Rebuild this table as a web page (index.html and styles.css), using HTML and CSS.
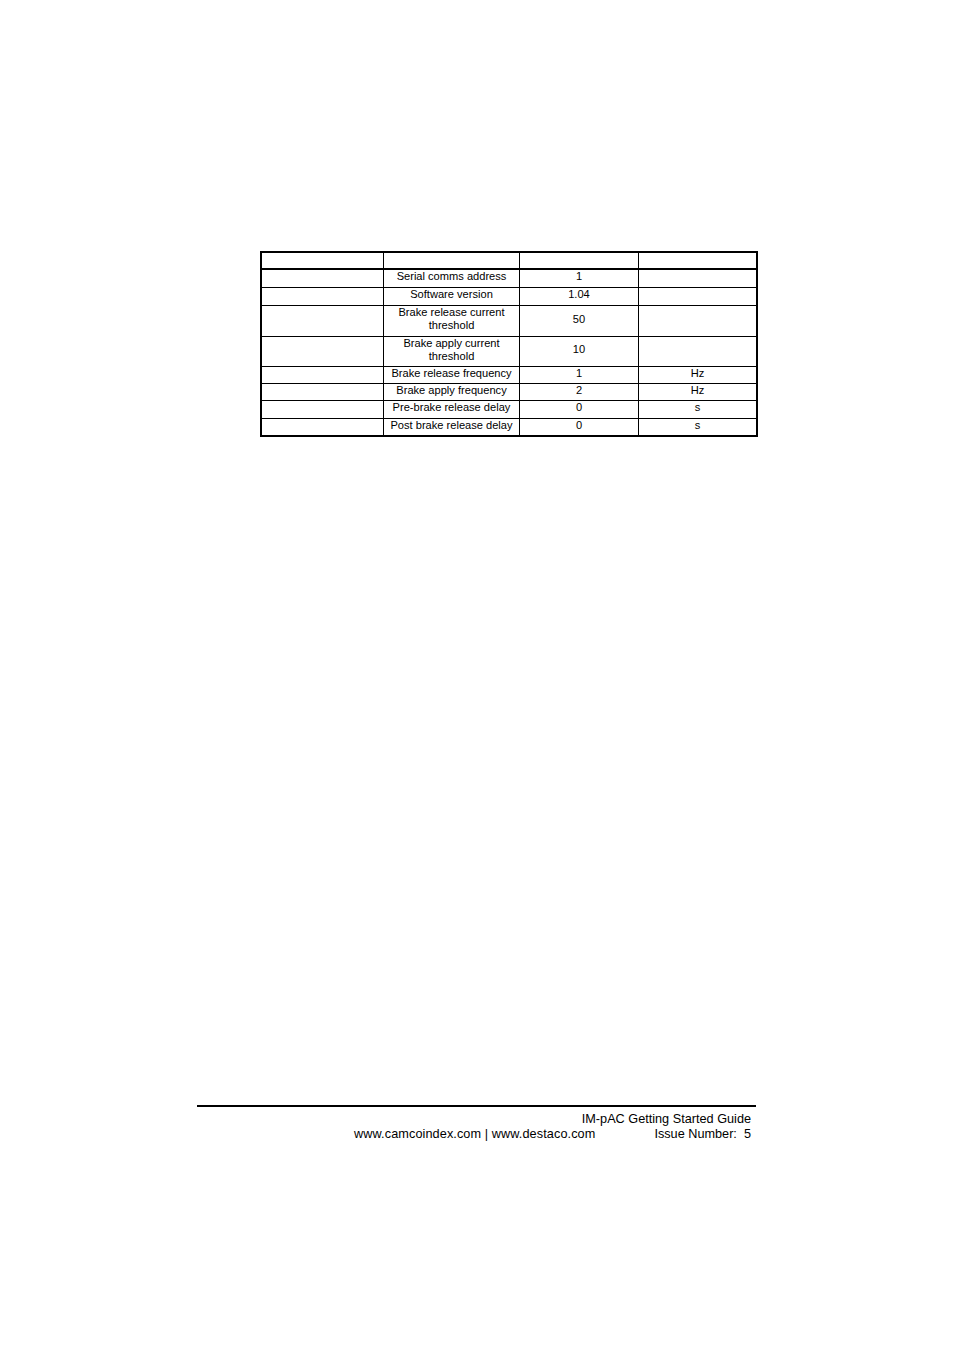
FILE: index.html
```html
<!DOCTYPE html>
<html>
<head>
<meta charset="utf-8">
<link rel="stylesheet" href="styles.css">
</head>
<body>
<div class="page">
  <div class="table">
    <div class="cell head"></div><div class="cell head"></div><div class="cell head"></div><div class="cell head"></div>
    <div class="cell"></div><div class="cell">Serial comms address</div><div class="cell">1</div><div class="cell"></div>
    <div class="cell"></div><div class="cell">Software version</div><div class="cell">1.04</div><div class="cell"></div>
    <div class="cell"></div><div class="cell">Brake release current<br>threshold</div><div class="cell">50</div><div class="cell"></div>
    <div class="cell"></div><div class="cell">Brake apply current<br>threshold</div><div class="cell">10</div><div class="cell"></div>
    <div class="cell"></div><div class="cell">Brake release frequency</div><div class="cell">1</div><div class="cell">Hz</div>
    <div class="cell"></div><div class="cell">Brake apply frequency</div><div class="cell">2</div><div class="cell">Hz</div>
    <div class="cell"></div><div class="cell">Pre-brake release delay</div><div class="cell">0</div><div class="cell">s</div>
    <div class="cell"></div><div class="cell">Post brake release delay</div><div class="cell">0</div><div class="cell">s</div>
  </div>

  <div class="footer">
    <div class="footer-line">IM-pAC Getting Started Guide</div>
    <div class="footer-line split">
      <span class="sites">www.camcoindex.com | www.destaco.com</span>
      <span class="issue">Issue Number:  5</span>
    </div>
  </div>
</div>
</body>
</html>
```

FILE: styles.css
```css
html, body {
  margin: 0;
  padding: 0;
  background: #ffffff;
}

.page {
  width: 954px;
  min-height: 1350px;
  font-family: "Liberation Sans", Arial, sans-serif;
  color: #000000;
  padding-top: 251px;
  box-sizing: border-box;
}

.table {
  margin-left: 260px;
  width: 498px;
  box-sizing: border-box;
  border: 2px solid #000;
  background: #000;
  display: grid;
  grid-template-columns: 121px 135px 118px 117px;
  grid-template-rows: 16px 17px 17px 30px 29px 16px 16px 17px 16px;
  gap: 1px;
}

.cell {
  background: #fff;
  font-size: 11.1px;
  line-height: 13px;
  text-align: center;
  display: flex;
  align-items: center;
  justify-content: center;
  padding-bottom: 4px;
  box-sizing: border-box;
  white-space: nowrap;
}

.cell.head {
  height: 16px;
  border-bottom: 1px solid #000;
}

.footer {
  margin-top: 668px;
  margin-left: 197px;
  width: 559px;
  border-top: 2px solid #000;
  padding-top: 5px;
  padding-right: 5px;
  box-sizing: border-box;
  font-size: 12.7px;
  line-height: 15px;
}

.footer-line {
  text-align: right;
}

.footer-line.split {
  display: flex;
  justify-content: flex-end;
}

.sites {
  margin-right: 59px;
  letter-spacing: 0.09px;
}

.issue {
  white-space: pre;
}
```
